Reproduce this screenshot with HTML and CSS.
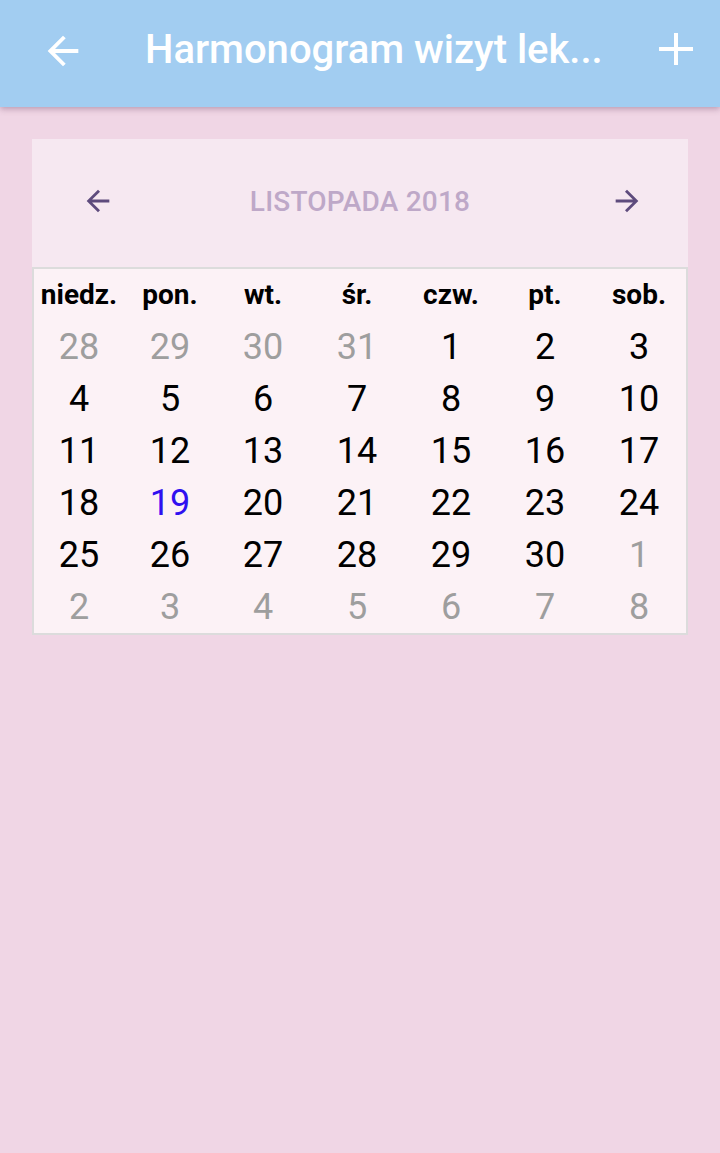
FILE: index.html
```html
<!DOCTYPE html>
<html lang="pl">
<head>
<meta charset="utf-8">
<link rel="stylesheet" href="styles.css">
</head>
<body>
<header class="appbar">
  <button class="icon-btn back" aria-label="Wstecz">
    <svg width="46" height="46" viewBox="0 0 24 24"><path d="M20 11H7.83l5.59-5.59L12 4l-8 8 8 8 1.41-1.41L7.83 13H20v-2z" fill="#fff"/></svg>
  </button>
  <h1 class="title">Harmonogram wizyt lek...</h1>
  <button class="icon-btn add" aria-label="Dodaj">
    <svg width="34" height="32" viewBox="0 0 34 32"><path d="M17 0V32M0 16H34" stroke="#fff" stroke-width="4" fill="none"/></svg>
  </button>
</header>
<main class="content">
  <section class="calendar">
    <div class="cal-head">
      <button class="nav-btn" aria-label="Poprzedni">
        <svg width="34" height="34" viewBox="0 0 24 24"><path d="M20 11H7.83l5.59-5.59L12 4l-8 8 8 8 1.41-1.41L7.83 13H20v-2z" fill="#5e4b7d"/></svg>
      </button>
      <div class="month">LISTOPADA 2018</div>
      <button class="nav-btn" aria-label="Następny">
        <svg width="34" height="34" viewBox="0 0 24 24"><path d="M4 11h12.17l-5.59-5.59L12 4l8 8-8 8-1.41-1.41L16.17 13H4v-2z" fill="#5e4b7d"/></svg>
      </button>
    </div>
    <div class="cal-body">
      <div class="wd">niedz.</div><div class="wd">pon.</div><div class="wd">wt.</div><div class="wd">śr.</div><div class="wd">czw.</div><div class="wd">pt.</div><div class="wd">sob.</div>
      <div class="d out">28</div><div class="d out">29</div><div class="d out">30</div><div class="d out">31</div><div class="d">1</div><div class="d">2</div><div class="d">3</div>
      <div class="d">4</div><div class="d">5</div><div class="d">6</div><div class="d">7</div><div class="d">8</div><div class="d">9</div><div class="d">10</div>
      <div class="d">11</div><div class="d">12</div><div class="d">13</div><div class="d">14</div><div class="d">15</div><div class="d">16</div><div class="d">17</div>
      <div class="d">18</div><div class="d today">19</div><div class="d">20</div><div class="d">21</div><div class="d">22</div><div class="d">23</div><div class="d">24</div>
      <div class="d">25</div><div class="d">26</div><div class="d">27</div><div class="d">28</div><div class="d">29</div><div class="d">30</div><div class="d out">1</div>
      <div class="d out">2</div><div class="d out">3</div><div class="d out">4</div><div class="d out">5</div><div class="d out">6</div><div class="d out">7</div><div class="d out">8</div>
    </div>
  </section>
</main>
</body>
</html>
```
FILE: styles.css
```css
* { box-sizing: border-box; }
html, body { margin: 0; padding: 0; }
body {
  width: 720px;
  min-height: 1153px;
  background: #f0d6e5;
  font-family: Roboto, "Noto Sans", sans-serif;
}
.appbar {
  height: 107px;
  background: #a2cdf1;
  display: flex;
  align-items: center;
  box-shadow: 0 2px 6px rgba(120, 80, 110, 0.45);
  position: relative;
  z-index: 1;
}
.icon-btn {
  background: none;
  border: 0;
  padding: 0;
  display: flex;
  align-items: center;
  justify-content: center;
}
.back { margin-left: 40px; margin-top: -6px; width: 46px; height: 46px; }
.add { margin-left: auto; margin-right: 27px; margin-top: -10px; width: 34px; height: 32px; }
.title {
  margin: 0 0 0 59px;
  color: #fff;
  font-size: 40px;
  font-weight: 500;
  letter-spacing: 0;
  line-height: 1;
  padding-bottom: 8px;
  white-space: nowrap;
}
.content {
  padding: 32px 32px 0 32px;
}
.calendar {
  width: 656px;
}
.cal-head {
  height: 128px;
  background: #f6e8f1;
  display: flex;
  align-items: center;
  padding: 0 41px 4px 46px;
}
.nav-btn {
  background: none;
  border: 0;
  padding: 0;
  width: 40px;
  height: 40px;
  display: flex;
  align-items: center;
  justify-content: center;
}
.month {
  flex: 1;
  text-align: center;
  color: #bea8c8;
  font-size: 28px;
  font-weight: 500;
  letter-spacing: 0.2px;
  padding-right: 5px;
}
.cal-body {
  background: #fcf2f6;
  border: 2px solid #dcdcdc;
  display: grid;
  grid-template-columns: 90px 92px repeat(5, 94px);
  grid-auto-rows: 52px;
}
.wd, .d {
  display: flex;
  align-items: center;
  justify-content: center;
}
.wd {
  font-size: 28px;
  font-weight: 700;
  color: #000;
  padding-bottom: 2px;
}
.d {
  font-size: 36px;
  color: #000;
}
.d.out { color: #9e9e9e; }
.d.today { color: #3010f0; }
```
